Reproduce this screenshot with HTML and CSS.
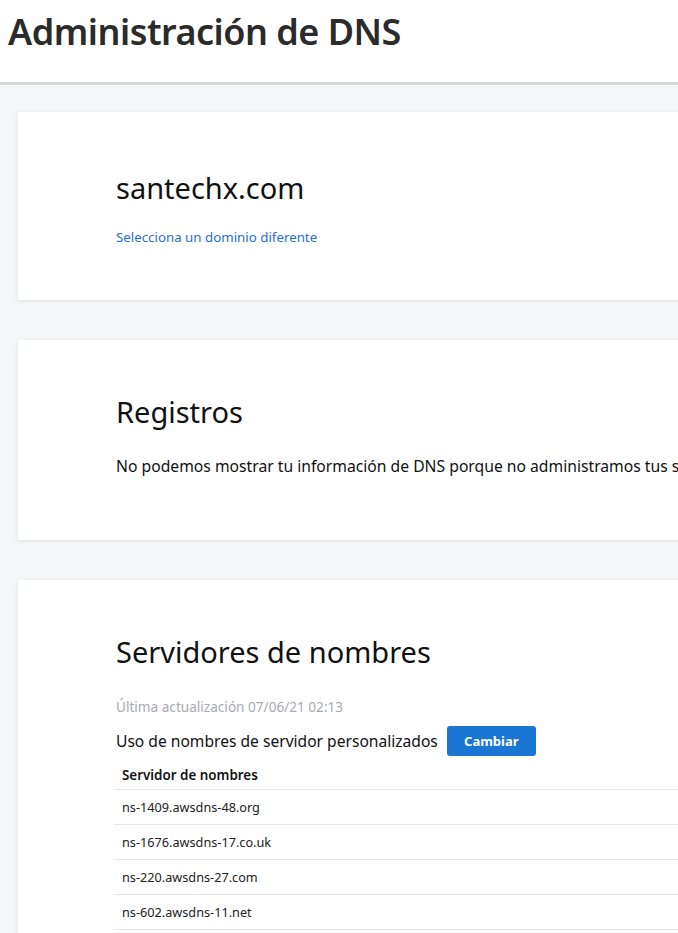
FILE: index.html
```html
<!DOCTYPE html>
<html lang="es">
<head>
<meta charset="utf-8">
<title>Administración de DNS</title>
<link rel="stylesheet" href="styles.css">
</head>
<body>
<header class="page-header">
  <h1 class="page-title">Administración de DNS</h1>
</header>
<main class="content">
  <section class="card card-domain">
    <h2 class="domain-name">santechx.com</h2>
    <a class="link" href="#">Selecciona un dominio diferente</a>
  </section>
  <section class="card card-records">
    <h2 class="section-title">Registros</h2>
    <p class="body-text">No podemos mostrar tu información de DNS porque no administramos tus servidores de nombres.</p>
  </section>
  <section class="card card-ns">
    <h2 class="section-title">Servidores de nombres</h2>
    <p class="updated">Última actualización 07/06/21 02:13</p>
    <div class="ns-type">
      <span class="ns-type-label">Uso de nombres de servidor personalizados</span>
      <button class="btn-primary" type="button">Cambiar</button>
    </div>
    <table class="ns-table">
      <thead><tr><th>Servidor de nombres</th></tr></thead>
      <tbody>
        <tr><td>ns-1409.awsdns-48.org</td></tr>
        <tr><td>ns-1676.awsdns-17.co.uk</td></tr>
        <tr><td>ns-220.awsdns-27.com</td></tr>
        <tr><td>ns-602.awsdns-11.net</td></tr>
      </tbody>
    </table>
  </section>
</main>
</body>
</html>
```
FILE: styles.css
```css
html, body {
  margin: 0;
  padding: 0;
  overflow: hidden;
  background: #f5f6f8;
}
body {
  font-family: "Noto Sans", "Liberation Sans", sans-serif;
  color: #111;
  width: 678px;
  height: 933px;
}
.page-header {
  background: #fff;
  height: 82px;
  border-bottom: 3px solid #d6d7d9;
  box-sizing: content-box;
}
.page-title {
  margin: 0;
  padding: 8px 0 0 8px;
  font-size: 36px;
  font-weight: 600;
  letter-spacing: -0.5px;
  color: #2b2b2b;
  line-height: 48px;
}
.content {
  padding: 27px 0 0 18px;
  display: flex;
  flex-direction: column;
  gap: 40px;
  width: 1100px;
}
.card {
  background: #fff;
  box-shadow: 0 1px 4px rgba(0,0,0,0.10);
  padding: 0 0 0 98px;
  display: flex;
  flex-direction: column;
  align-items: flex-start;
}
.card-domain { height: 188px; padding-top: 58px; box-sizing: border-box; }
.card-records { height: 200px; padding-top: 54px; box-sizing: border-box; }
.card-ns { padding-top: 54px; padding-bottom: 60px; }
.domain-name {
  margin: 0;
  font-size: 29px;
  font-weight: 400;
  line-height: 36px;
  color: #111;
}
.link {
  margin-top: 22px;
  font-size: 13.3px;
  color: #1f6fd0;
  text-decoration: none;
}
.section-title {
  margin: 0;
  font-size: 29px;
  font-weight: 400;
  line-height: 36px;
  color: #111;
}
.body-text {
  margin: 25px 0 0 0;
  font-size: 15.7px;
  white-space: nowrap;
  color: #111;
}
.updated {
  margin: 27px 0 0 0;
  font-size: 13.6px;
  color: #a8abaf;
}
.ns-type {
  display: flex;
  align-items: center;
  gap: 9px;
  margin-top: 10px;
}
.ns-type-label {
  font-size: 15.6px;
  color: #111;
}
.btn-primary {
  background: #1976d2;
  color: #fff;
  border: 0;
  border-radius: 3px;
  height: 30px;
  width: 89px;
  font-family: inherit;
  font-weight: 700;
  font-size: 13px;
}
.ns-table {
  margin: 4px 0 0 -2px;
  width: 980px;
  border-collapse: collapse;
}
.ns-table th, .ns-table td {
  text-align: left;
  padding: 0 8px;
  height: 34px;
  border-bottom: 1px solid #e6e7e8;
  font-size: 12.7px;
}
.ns-table th {
  font-weight: 600;
  font-size: 13.4px;
  height: 29px;
  color: #111;
}
.ns-table td { color: #222; }
```
